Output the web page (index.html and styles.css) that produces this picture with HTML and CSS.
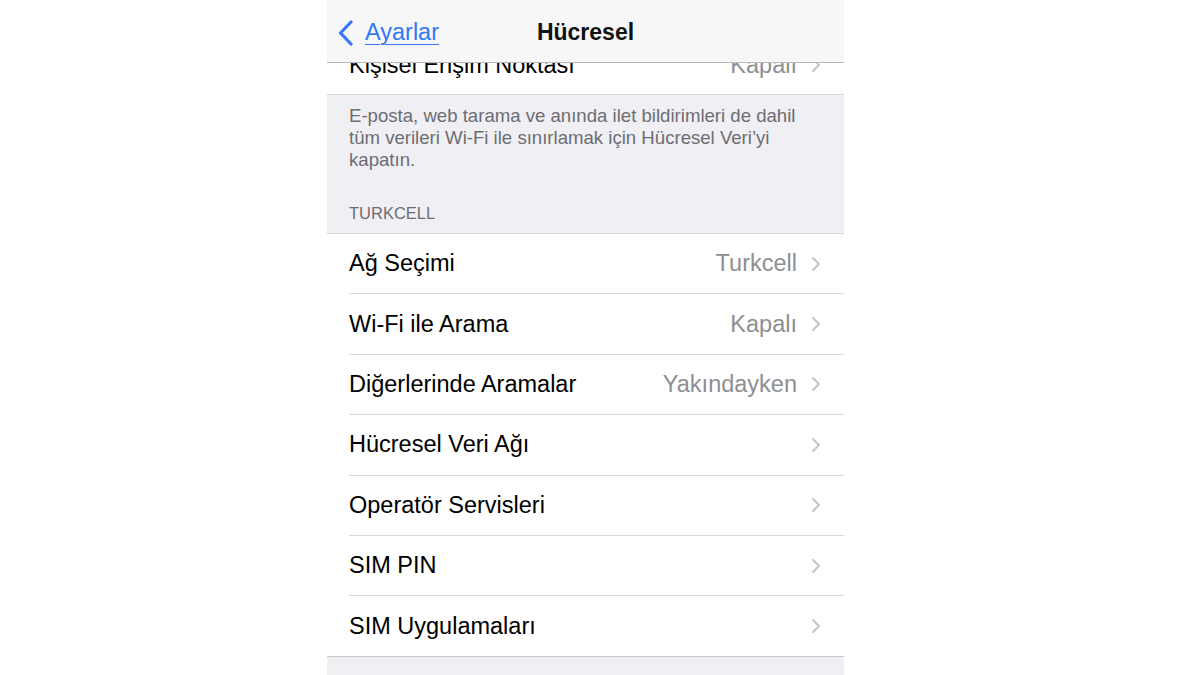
FILE: index.html
```html
<!DOCTYPE html>
<html lang="tr">
<head>
<meta charset="utf-8">
<title>Hücresel</title>
<link rel="stylesheet" href="styles.css">
</head>
<body>
<div class="phone">
  <div class="navbar">
    <a class="back" href="#">
      <svg class="back-chev" width="18" height="26" viewBox="0 0 18 26"><path d="M14 2 L3.5 13 L14 24" fill="none" stroke="#3478f6" stroke-width="3.2" stroke-linecap="round" stroke-linejoin="round"/></svg>
      <span class="back-label">Ayarlar</span>
    </a>
    <div class="title">Hücresel</div>
  </div>
  <div class="content">
    <div class="row row-top">
      <span class="label">Kişisel Erişim Noktası</span>
      <span class="value">Kapalı</span>
      <svg class="chev" width="12" height="16" viewBox="0 0 12 16"><path d="M3 2 L9 8 L3 14" fill="none" stroke="#c4c4c7" stroke-width="2" stroke-linecap="round" stroke-linejoin="round"/></svg>
    </div>
    <div class="section-gap">
      <p class="footer">E-posta, web tarama ve anında ilet bildirimleri de dahil tüm verileri Wi-Fi ile sınırlamak için Hücresel Veri’yi kapatın.</p>
      <div class="header">TURKCELL</div>
    </div>
    <div class="group">
      <div class="row"><span class="label">Ağ Seçimi</span><span class="value">Turkcell</span><svg class="chev" width="12" height="16" viewBox="0 0 12 16"><path d="M3 2 L9 8 L3 14" fill="none" stroke="#c4c4c7" stroke-width="2" stroke-linecap="round" stroke-linejoin="round"/></svg></div>
      <div class="row"><span class="label">Wi-Fi ile Arama</span><span class="value">Kapalı</span><svg class="chev" width="12" height="16" viewBox="0 0 12 16"><path d="M3 2 L9 8 L3 14" fill="none" stroke="#c4c4c7" stroke-width="2" stroke-linecap="round" stroke-linejoin="round"/></svg></div>
      <div class="row"><span class="label">Diğerlerinde Aramalar</span><span class="value">Yakındayken</span><svg class="chev" width="12" height="16" viewBox="0 0 12 16"><path d="M3 2 L9 8 L3 14" fill="none" stroke="#c4c4c7" stroke-width="2" stroke-linecap="round" stroke-linejoin="round"/></svg></div>
      <div class="row"><span class="label">Hücresel Veri Ağı</span><span class="value"></span><svg class="chev" width="12" height="16" viewBox="0 0 12 16"><path d="M3 2 L9 8 L3 14" fill="none" stroke="#c4c4c7" stroke-width="2" stroke-linecap="round" stroke-linejoin="round"/></svg></div>
      <div class="row"><span class="label">Operatör Servisleri</span><span class="value"></span><svg class="chev" width="12" height="16" viewBox="0 0 12 16"><path d="M3 2 L9 8 L3 14" fill="none" stroke="#c4c4c7" stroke-width="2" stroke-linecap="round" stroke-linejoin="round"/></svg></div>
      <div class="row"><span class="label">SIM PIN</span><span class="value"></span><svg class="chev" width="12" height="16" viewBox="0 0 12 16"><path d="M3 2 L9 8 L3 14" fill="none" stroke="#c4c4c7" stroke-width="2" stroke-linecap="round" stroke-linejoin="round"/></svg></div>
      <div class="row row-last"><span class="label">SIM Uygulamaları</span><span class="value"></span><svg class="chev" width="12" height="16" viewBox="0 0 12 16"><path d="M3 2 L9 8 L3 14" fill="none" stroke="#c4c4c7" stroke-width="2" stroke-linecap="round" stroke-linejoin="round"/></svg></div>
    </div>
    <div class="bottom-gap"></div>
  </div>
</div>
</body>
</html>
```

FILE: styles.css
```css
* { box-sizing: border-box; }
html, body {
  margin: 0;
  padding: 0;
  background: #ffffff;
  height: 675px;
  overflow: hidden;
}
body {
  font-family: "Liberation Sans", Arial, sans-serif;
  color: #000;
}
.phone {
  position: relative;
  width: 517px;
  height: 675px;
  margin-left: 327px;
  background: #efeff4;
  overflow: hidden;
}
.navbar {
  position: absolute;
  top: 0;
  left: 0;
  right: 0;
  height: 63px;
  background: #f7f7f7;
  border-bottom: 1px solid #b9b9bc;
  z-index: 2;
  display: flex;
  align-items: center;
  justify-content: center;
}
.back {
  position: absolute;
  left: 10px;
  top: 19px;
  display: flex;
  align-items: center;
  gap: 10px;
  color: #3478f6;
  text-decoration: none;
}
.back-label {
  font-size: 23.5px;
  text-decoration: underline;
  text-decoration-thickness: 1px;
  text-underline-offset: 4px;
}
.title {
  font-size: 23px;
  font-weight: bold;
  margin-top: 2px;
  color: #111;
}
.content {
  padding-top: 36px;
}
.row {
  display: flex;
  align-items: center;
  height: 60.4px;
  margin-left: 22px;
  padding-right: 22px;
  border-bottom: 1px solid #d8d8dc;
  background: #fff;
  font-size: 23.5px;
}
.group {
  background: #fff;
  border-top: 1px solid #d8d8dc;
}
.row-top {
  margin-left: 0;
  padding-left: 22px;
  height: 59px;
  border-bottom: 1px solid #d8d8dc;
}
.row-last {
  margin-left: 0;
  padding-left: 22px;
  border-bottom: 1px solid #c8c7cc;
}
.label {
  flex: 1;
}
.value {
  color: #8e8e93;
  margin-right: 13px;
}
.chev {
  display: block;
}
.section-gap {
  padding: 10px 30px 10px 22px;
}
.footer {
  margin: 0;
  font-size: 18.6px;
  line-height: 22px;
  color: #6d6d72;
}
.header {
  margin-top: 32px;
  font-size: 16.5px;
  line-height: 20px;
  color: #6d6d72;
}
.bottom-gap {
  height: 40px;
}
```
